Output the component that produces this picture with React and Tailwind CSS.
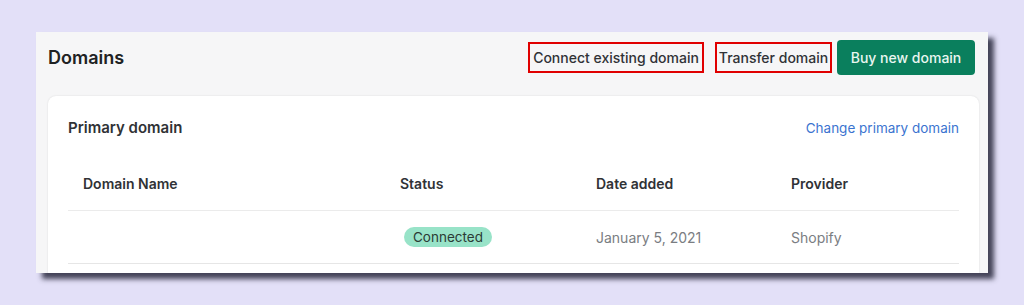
import React from 'react';

const columns = ['Domain Name', 'Status', 'Date added', 'Provider'];

const App = () => {
  return (
    <div className="w-[1024px] h-[305px] bg-[#e3e0f8] pt-[32px] pl-[36px] font-['Inter',sans-serif] overflow-hidden">
      <div className="w-[952px] h-[241px] bg-[#f6f6f7] overflow-hidden shadow-[6px_6px_5px_rgba(40,40,60,0.85)]">
        {/* header */}
        <div className="flex justify-between items-start pl-3 pr-[13px] pt-2 h-[64px]">
          <h1 className="text-[18px] font-semibold text-[#202223] mt-[7px] leading-[22px]">Domains</h1>
          <div className="flex items-center">
            <button className="h-[31px] w-[176px] border-2 border-[#e00000] text-[14px] font-medium text-[#303236] flex items-center justify-center">
              Connect existing domain
            </button>
            <button className="ml-[11px] h-[31px] w-[117px] border-2 border-[#e00000] text-[14px] font-medium text-[#303236] flex items-center justify-center">
              Transfer domain
            </button>
            <button className="ml-[5px] h-[35px] w-[138px] rounded-[4px] bg-[#0a7f5d] text-[14px] font-medium text-[#e9f6f0] flex items-center justify-center">
              Buy new domain
            </button>
          </div>
        </div>

        {/* card */}
        <div className="ml-3 mr-[9px] bg-white rounded-t-lg shadow-[0_0_2px_rgba(0,0,0,0.12)] px-5 h-[200px]">
          <div className="flex items-center justify-between pt-[22px] leading-[20px]">
            <h2 className="text-[15px] font-semibold text-[#303236]">Primary domain</h2>
            <a className="text-[13.5px] text-[#3b74d0]">Change primary domain</a>
          </div>
          <div className="grid grid-cols-[317px_196px_195px_1fr] h-[73px] items-end pb-4 border-b border-[#ebebeb] text-[14px] font-semibold text-[#303236] leading-[20px]">
            {columns.map((c) => (
              <div key={c} className="pl-[15px]">{c}</div>
            ))}
          </div>
          <div className="grid grid-cols-[317px_196px_195px_1fr] h-[53px] items-center border-b border-[#e6e6e6] text-[14px] text-[#7a7d82] leading-[20px]">
            <div></div>
            <div className="pl-[19px]">
              <span className="inline-flex items-center h-[20px] px-[9px] rounded-full bg-[#98e3c8] text-[#2b3b35] text-[13.5px]">Connected</span>
            </div>
            <div className="pl-[15px] pt-[2px]">January 5, 2021</div>
            <div className="pl-[15px] pt-[2px]">Shopify</div>
          </div>
        </div>
      </div>
    </div>
  );
};

export default App;
